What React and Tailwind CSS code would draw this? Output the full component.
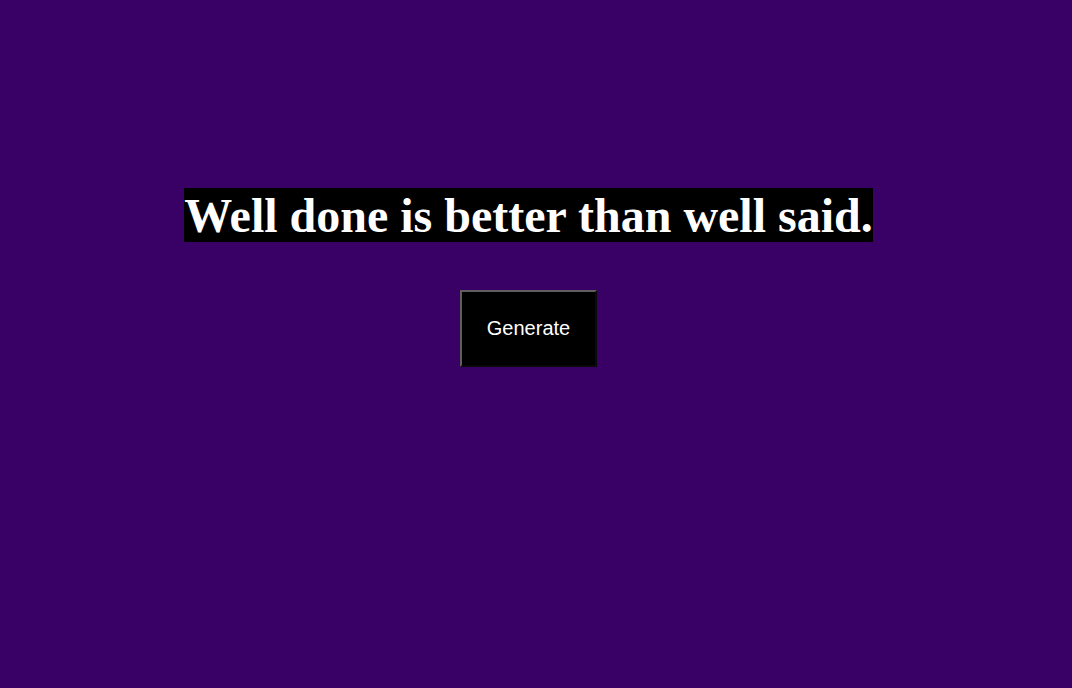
import React from "react";

const App = () => {
  return (
    <div className="min-h-[688px] w-full bg-[#390066]">
      <div className="flex w-[1057px] flex-col items-center pt-[188px]">
        <h1 className="m-0 font-['Liberation_Serif',serif] text-[48px] font-bold leading-none">
          <span className="inline-block bg-black pt-[4px] pb-[2px] leading-[48px] text-white">
            Well done is better than well said.
          </span>
        </h1>
        <button
          type="button"
          className="mt-[48px] flex h-[77px] w-[137px] items-center justify-center border-2 border-t-[#5e5e5e] border-l-[#5e5e5e] border-r-[#0a0a0a] border-b-[#0a0a0a] bg-black pb-[2px] font-['Liberation_Sans',Arial,sans-serif] text-[20px] text-white"
        >
          Generate
        </button>
      </div>
    </div>
  );
};

export default App;
